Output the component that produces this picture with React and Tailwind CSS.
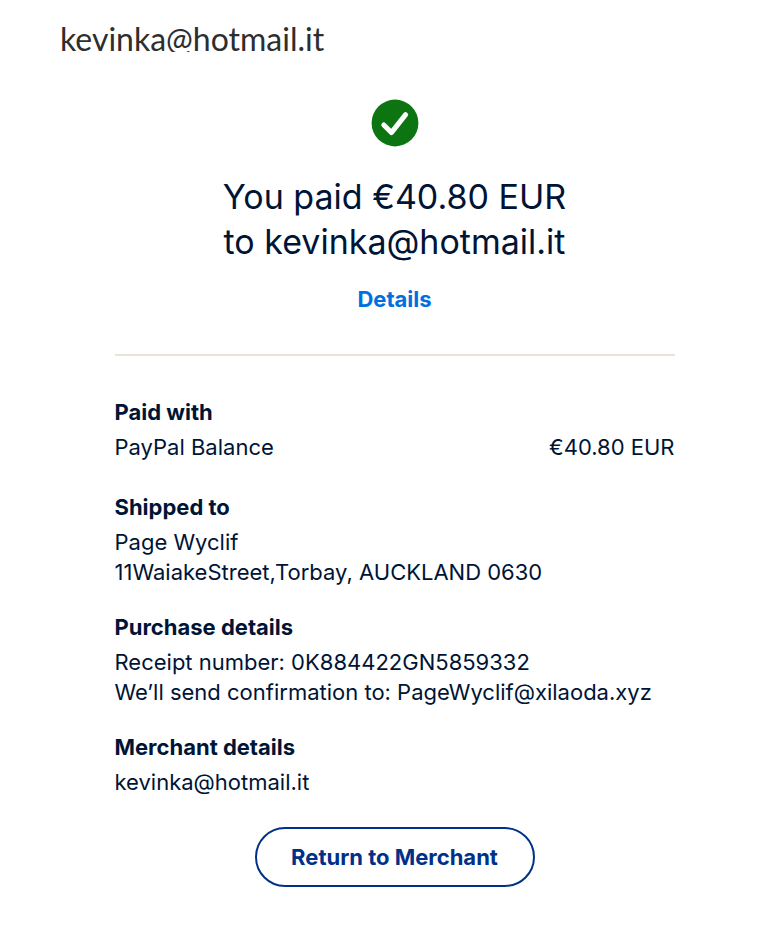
import React from "react";

const sections = [
  {
    title: "Shipped to",
    lines: ["Page Wyclif", "11WaiakeStreet,Torbay, AUCKLAND 0630"],
  },
  {
    title: "Purchase details",
    lines: [
      "Receipt number: 0K884422GN5859332",
      "We’ll send confirmation to: PageWyclif@xilaoda.xyz",
    ],
  },
  {
    title: "Merchant details",
    lines: ["kevinka@hotmail.it"],
  },
];

function SuccessIcon() {
  return (
    <svg
      className="mx-auto h-12 w-12"
      viewBox="0 0 48 48"
      fill="none"
      role="img"
      aria-label="Payment complete"
    >
      <circle cx="24" cy="24" r="23.4" fill="#0d7412" />
      <path
        d="M12.8 26L20.4 33.6L34.6 15.6"
        stroke="#fff"
        strokeWidth="5"
        strokeLinecap="round"
        strokeLinejoin="round"
      />
    </svg>
  );
}

function Section({ title, children }) {
  return (
    <section>
      <h2 className="mb-[5px] text-[22px] leading-[30px] font-bold">{title}</h2>
      {children}
    </section>
  );
}

function App() {
  return (
    <div className="min-h-screen bg-white pb-11 font-['Inter',sans-serif] text-[#001435]">
      <header className="px-15 pt-5">
        {/* Merchant bar clips the descenders */}
        <div className="h-8 overflow-hidden font-['Lato',sans-serif] text-[32px] leading-[38px] text-[#2c2e2f]">
          kevinka@hotmail.it
        </div>
      </header>

      <main className="pr-4 pl-[46px] pt-[47px]">
        <div className="mx-auto w-full max-w-[560px]">
          <SuccessIcon />
          <h1 className="mt-[27px] text-center text-[34px] leading-[45px]">
            You paid €40.80 EUR
            <br />
            to kevinka@hotmail.it
          </h1>
          <div className="mt-5 text-center">
            <a
              href="#details"
              className="text-[22px] leading-[30px] font-bold text-[#0070e0]"
            >
              Details
            </a>
          </div>

          <hr className="mt-10 border-t-2 border-[#eae3da]" />

          <div
            id="details"
            className="mt-[41px] flex flex-col gap-[25px] text-[22px] leading-[30px]"
          >
            <Section title="Paid with">
              <div className="flex justify-between pb-[5px]">
                <span>PayPal Balance</span>
                <span>€40.80 EUR</span>
              </div>
            </Section>
            {sections.map((section) => (
              <Section key={section.title} title={section.title}>
                {section.lines.map((line) => (
                  <p key={line}>{line}</p>
                ))}
              </Section>
            ))}
          </div>

          <button
            type="button"
            className="mx-auto mt-[30px] block h-15 min-w-[280px] rounded-full border-2 border-[#003087] px-8 text-[22px] leading-[30px] font-bold text-[#003087]"
          >
            Return to Merchant
          </button>
        </div>
      </main>
    </div>
  );
}

export default App;
